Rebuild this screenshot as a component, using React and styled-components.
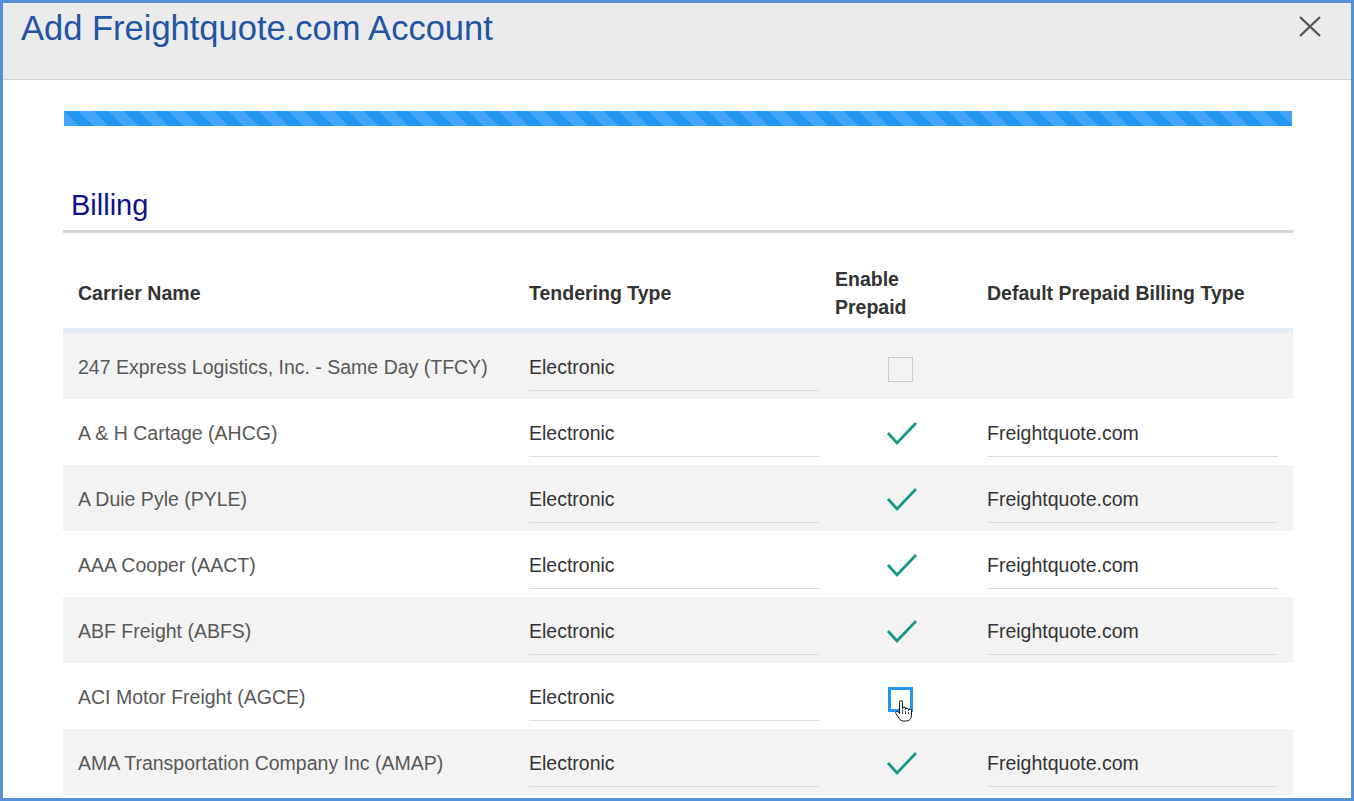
import styled, { createGlobalStyle } from 'styled-components';

const GlobalStyle = createGlobalStyle`
  * { box-sizing: border-box; }
  html, body { margin: 0; padding: 0; }
  body {
    font-family: "Liberation Sans", Arial, sans-serif;
    background: #ffffff;
  }
`

const Modal = styled.div`
  width: 1354px;
  height: 801px;
  border: 3px solid #5590d9;
  background: #ffffff;
  display: flex;
  flex-direction: column;
  overflow: hidden;
`

const Header = styled.div`
  height: 77px;
  flex-shrink: 0;
  background: #ebebeb;
  border-bottom: 1px solid #d2d2d2;
  display: flex;
  justify-content: space-between;
  align-items: flex-start;
  padding: 6px 30px 0 18px;
`

const Title = styled.h1`
  margin: 0;
  font-size: 34.5px;
  font-weight: 400;
  line-height: 38px;
  color: #2254a4;
`

const Close = styled.button`
  margin-top: 6px;
  padding: 0;
  border: none;
  background: none;
  width: 22px;
  height: 22px;
  cursor: pointer;
`

const Body = styled.div`
  flex: 1;
  padding: 31px 58px 0 60px;
  overflow: hidden;
`

const Progress = styled.div`
  height: 15px;
  margin: 0 1px;
  background: repeating-linear-gradient(
    45deg,
    #42a5f5 0 10.6px,
    #2196f3 10.6px 21.21px
  );
`

const SectionTitle = styled.h2`
  margin: 63px 0 0;
  padding: 0 0 8px 8px;
  font-size: 29px;
  font-weight: 400;
  line-height: 33px;
  color: #10108c;
  border-bottom: 3px solid #d3d3d3;
`

const Columns = `
  display: grid;
  grid-template-columns: 451px 306px 152px 321px;
`

const HeadRow = styled.div`
  ${Columns}
  height: 100px;
  padding-top: 24px;
  align-items: center;
  border-bottom: 5px solid #e5ecf7;
`

const HeadCell = styled.div`
  padding-left: 15px;
  font-size: 19.5px;
  font-weight: 700;
  line-height: 28px;
  color: #333333;
`

const Row = styled.div`
  ${Columns}
  height: 66px;
  align-items: start;
  background: ${p => (p.$odd ? '#f3f3f3' : '#ffffff')};
`

const Cell = styled.div`
  padding: 23px 0 0 15px;
  font-size: 19.5px;
  line-height: 22px;
  color: ${p => p.$muted ? '#585858' : '#333333'};
  white-space: nowrap;
`

const Field = styled.div`
  margin-left: 15px;
  margin-top: 23px;
  width: ${p => p.$width}px;
  padding-bottom: 12px;
  border-bottom: 1px solid #dcdcdc;
  font-size: 19.5px;
  line-height: 22px;
  color: #333333;
`

const CheckCell = styled.div`
  padding: ${p => p.$top}px 0 0 ${p => p.$left}px;
`

const Box = styled.div`
  position: relative;
  width: 25px;
  height: 25px;
  border: ${p => (p.$focus ? '3px solid #2196f3' : '1px solid #cccccc')};
  background: ${p => (p.$focus ? '#ffffff' : 'transparent')};
`

const Pointer = styled.svg`
  position: absolute;
  left: 3px;
  top: 10px;
`

const carriers = [
  { name: '247 Express Logistics, Inc. - Same Day (TFCY)', prepaid: 'off' },
  { name: 'A & H Cartage (AHCG)', prepaid: 'on' },
  { name: 'A Duie Pyle (PYLE)', prepaid: 'on' },
  { name: 'AAA Cooper (AACT)', prepaid: 'on' },
  { name: 'ABF Freight (ABFS)', prepaid: 'on' },
  { name: 'ACI Motor Freight (AGCE)', prepaid: 'focus' },
  { name: 'AMA Transportation Company Inc (AMAP)', prepaid: 'on' },
]

const CheckMark = () => (
  <svg width="32" height="27" viewBox="0 0 32 27">
    <path d="M2 13 L11 23 L30 3" fill="none" stroke="#17998a" strokeWidth="2.8" />
  </svg>
)

const Prepaid = ({ state }) => {
  if (state === 'on') {
    return (
      <CheckCell $top={21} $left={66}>
        <CheckMark />
      </CheckCell>
    )
  }
  return (
    <CheckCell $top={24} $left={68}>
      <Box $focus={state === 'focus'}>
        {state === 'focus' && (
          <Pointer width="19" height="23" viewBox="0 0 19 23">
            <path
              d="M5.5 2.2a1.5 1.5 0 0 1 3 0v6.3a1.5 1.5 0 0 1 3 0v1a1.5 1.5 0 0 1 3 0v1a1.5 1.5 0 0 1 3 0v4.8c0 3.2-2 5.7-5 5.7h-3.2c-2 0-3.1-1-4.1-2.5l-3.4-5a1.5 1.5 0 0 1 2.3-1.8l1.4 1.8z"
              fill="#ffffff"
              stroke="#111111"
              strokeWidth="1"
            />
            <path d="M8.5 10v4M11.5 11v3M14.5 12v2" stroke="#111111" strokeWidth="0.8" />
          </Pointer>
        )}
      </Box>
    </CheckCell>
  )
}

const App = () => {
  return (
    <>
      <GlobalStyle />
      <Modal>
        <Header>
          <Title>Add Freightquote.com Account</Title>
          <Close aria-label="Close">
            <svg width="22" height="22" viewBox="0 0 22 22">
              <path d="M1 2 L21 21 M21 2 L1 21" stroke="#555555" strokeWidth="2.4" />
            </svg>
          </Close>
        </Header>
        <Body>
          <Progress />
          <SectionTitle>Billing</SectionTitle>
          <HeadRow>
            <HeadCell>Carrier Name</HeadCell>
            <HeadCell>Tendering Type</HeadCell>
            <HeadCell>Enable<br />Prepaid</HeadCell>
            <HeadCell>Default Prepaid Billing Type</HeadCell>
          </HeadRow>
          {carriers.map((c, i) => (
            <Row key={c.name} $odd={i % 2 === 0}>
              <Cell $muted>{c.name}</Cell>
              <Field $width={290}>Electronic</Field>
              <Prepaid state={c.prepaid} />
              {c.prepaid === 'on' ? <Field $width={291}>Freightquote.com</Field> : <div />}
            </Row>
          ))}
        </Body>
      </Modal>
    </>
  )
}

export default App
